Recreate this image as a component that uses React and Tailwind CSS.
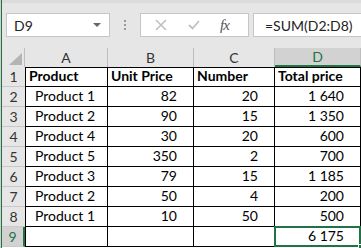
import React from 'react'

const rows = [
  ['Product', 'Unit Price', 'Number', 'Total price'],
  ['Product 1', '82', '20', '1 640'],
  ['Product 2', '90', '15', '1 350'],
  ['Product 4', '30', '20', '600'],
  ['Product 5', '350', '2', '700'],
  ['Product 3', '79', '15', '1 185'],
  ['Product 2', '50', '4', '200'],
  ['Product 1', '10', '50', '500'],
  ['', '', '', '6 175'],
]

const cols = [
  { name: 'A', head: 'w-[83px]', cell: 'w-[83px] border-l' },
  { name: 'B', head: 'w-[86px]', cell: 'w-[86px]' },
  { name: 'C', head: 'w-[81px]', cell: 'w-[81px]' },
  { name: 'D', head: 'w-[86px]', cell: 'w-[86px]' },
]

function Toolbar() {
  return (
    <div className="h-[48px] bg-[#e6e6e6] flex items-start pt-[10px] pl-[4px] border-t-[3px] border-[#dcdcdc]">
      <div className="w-[104px] h-[24px] bg-white border border-[#c6c6c6] flex items-center pl-[7px] pr-[8px]">
        <span className="text-[14px] text-[#222]">D9</span>
        <span className="ml-auto w-0 h-0 border-l-[4px] border-r-[4px] border-t-[4px] border-l-transparent border-r-transparent border-t-[#666]" />
      </div>
      <div className="w-[30px] h-[24px] flex flex-col items-center justify-center gap-[2px]">
        <span className="w-[2px] h-[2px] bg-[#9a9a9a]" />
        <span className="w-[2px] h-[2px] bg-[#9a9a9a]" />
        <span className="w-[2px] h-[2px] bg-[#9a9a9a]" />
      </div>
      <div className="w-[109px] h-[24px] bg-white border border-[#c6c6c6] flex items-center">
        <svg width="12" height="12" viewBox="0 0 12 12" className="ml-[14px]">
          <path d="M1 1 L11 11 M11 1 L1 11" stroke="#c0c0c0" strokeWidth="1.6" fill="none" />
        </svg>
        <svg width="12" height="10" viewBox="0 0 12 10" className="ml-[21px]">
          <path d="M1 5 L4.5 8.5 L11 1" stroke="#c0c0c0" strokeWidth="1.8" fill="none" />
        </svg>
        <span className="ml-[20px] text-[15px] italic text-[#555] font-['Liberation_Serif',serif] tracking-[-1px]">fx</span>
      </div>
      <div className="ml-[4px] flex-1 h-[24px] bg-white border border-r-0 border-[#c6c6c6] flex items-center pl-[11px]">
        <span className="text-[14px] text-[#222] whitespace-nowrap">=SUM(D2:D8)</span>
      </div>
    </div>
  )
}

function HeaderRow() {
  return (
    <div className="flex h-[19px] bg-[#e6e6e6]">
      <div className="w-[23px] border-r border-[#bdbdbd] relative">
        <svg width="13" height="12" viewBox="0 0 13 12" className="absolute right-[2px] bottom-[2px]">
          <path d="M13 0 L13 12 L0 12 Z" fill="#b4b4b4" />
        </svg>
      </div>
      {cols.map((c) => (
        <div
          key={c.name}
          className={`${c.head} flex items-center justify-center text-[14px] border-r border-[#bdbdbd] ${
            c.name === 'D' ? 'bg-[#d2d2d2] text-[#217346] border-b-2 border-b-[#217346]' : 'text-[#333]'
          }`}
        >
          {c.name}
        </div>
      ))}
    </div>
  )
}

function DataRow({ idx, cells }) {
  const last = idx === 9
  const bold = idx === 1
  return (
    <div className="flex h-[20px]">
      <div
        className={`w-[23px] flex items-center justify-center text-[14px] border-b border-[#c8c8c8] ${
          last ? 'bg-[#d2d2d2] text-[#217346] border-r-2 border-r-[#217346]' : 'bg-[#e6e6e6] text-[#333]'
        }`}
      >
        {idx}
      </div>
      {cells.map((v, i) => {
        const isD9 = last && i === 3
        const right = i > 0 && !bold
        return (
          <div
            key={i}
            className={`${cols[i].cell} relative flex items-end pb-[1px] border-black border-r border-b ${bold ? 'border-t font-bold' : ''} ${
              right ? 'justify-end pr-[16px]' : i === 0 && !bold ? 'pl-[9px]' : 'pl-[3px]'
            } text-[14px] leading-[18px] text-black whitespace-nowrap`}
          >
            {v}
            {isD9 && (
              <>
                <span className="absolute -left-[1px] -top-[1px] -right-[1px] -bottom-[1px] border-2 border-[#217346]" />
                <span className="absolute -right-[3px] -bottom-[3px] w-[5px] h-[5px] bg-[#217346] border border-white" />
              </>
            )}
          </div>
        )
      })}
    </div>
  )
}

export default function App() {
  return (
    <div className="w-[361px] h-[248px] overflow-hidden bg-white flex font-['Lato',sans-serif]">
      <div className="w-[1px] bg-[#cfcfcf]" />
      <div className="w-[1px] bg-[#217346]" />
      <div className="flex-1 flex flex-col">
        <Toolbar />
        <HeaderRow />
        {rows.map((r, i) => (
          <DataRow key={i} idx={i + 1} cells={r} />
        ))}
      </div>
    </div>
  )
}
